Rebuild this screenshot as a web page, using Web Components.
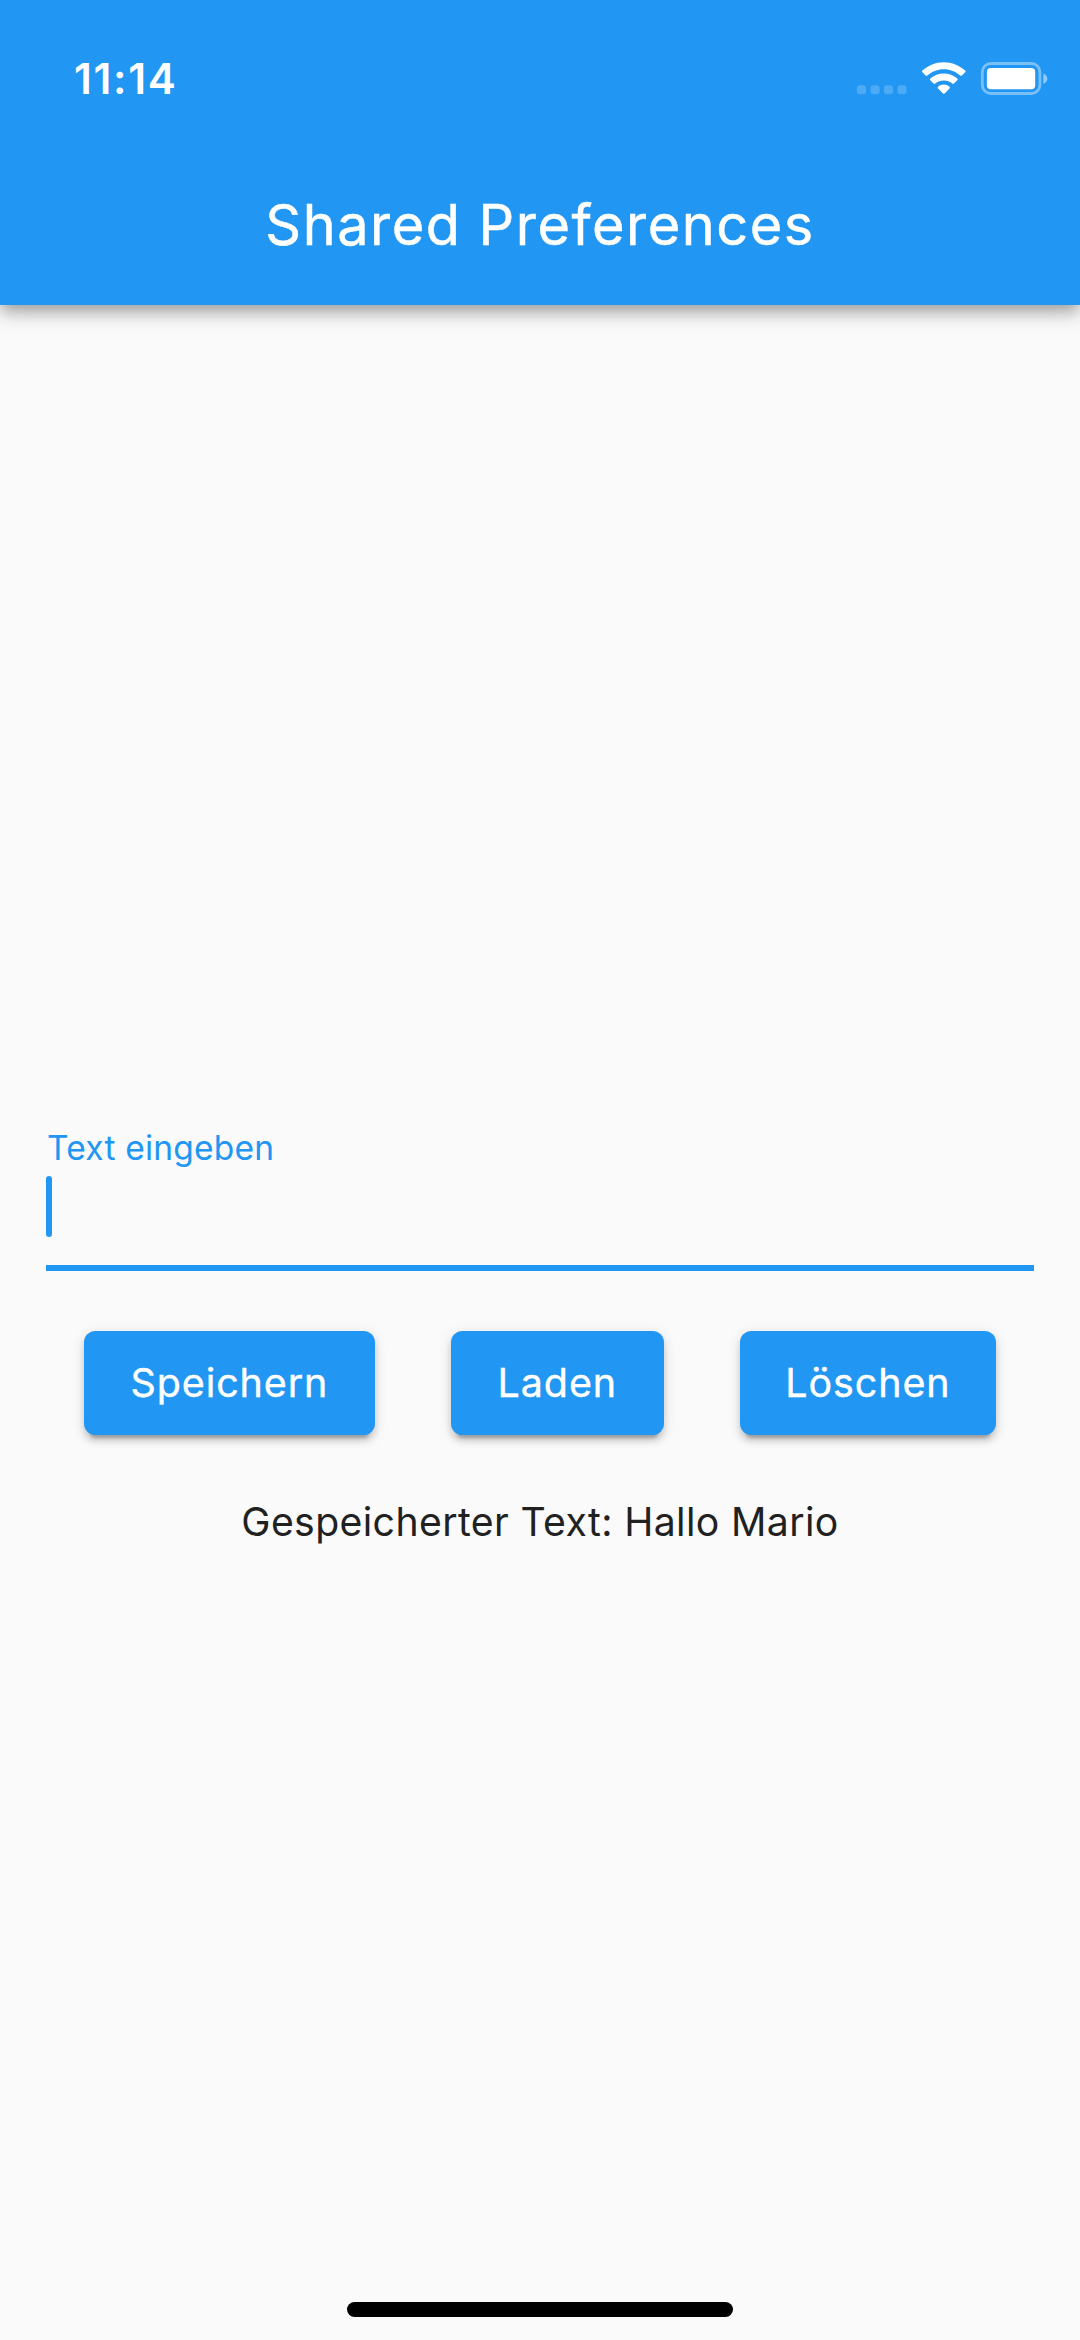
<!DOCTYPE html>
<html lang="de">
<head>
<meta charset="utf-8">
<title>Shared Preferences</title>
<style>
  html, body { margin: 0; height: 100%; background: #fafafa; }
  body { font-family: Inter, Roboto, "Liberation Sans", sans-serif; overflow: hidden; }
</style>
</head>
<body>
<prefs-app></prefs-app>
<script>
const define = (name, html) => {
  const template = document.createElement('template');
  template.innerHTML = html;
  customElements.define(name, class extends HTMLElement {
    constructor() {
      super();
      this.attachShadow({ mode: 'open' }).append(template.content.cloneNode(true));
    }
  });
};

define('status-bar', `
  <style>
    :host { display: flex; justify-content: space-between; height: 157px; box-sizing: border-box; padding: 0 32px 0 74px; color: #fff; }
    time { font-size: 42.2px; font-weight: 600; line-height: 157px; letter-spacing: 1.68px; white-space: nowrap; }
    svg { display: block; width: 192px; height: 36px; margin-top: 61px; }
  </style>
  <time><slot></slot></time>
  <svg viewBox="856 61 192 36" fill="#fff">
    <g fill-opacity=".2">
      <rect x="857" y="85.3" width="9" height="9" rx="3"/>
      <rect x="870.6" y="85.3" width="9" height="9" rx="3"/>
      <rect x="884" y="85.3" width="9" height="9" rx="3"/>
      <rect x="897.5" y="85.3" width="9" height="9" rx="3"/>
    </g>
    <path d="M943.8 62.2c8.2 0 15.7 3.2 21.4 8.4.5.5.5 1.200 0 1.700l-3.300 3.300c-.5.5-1.100.5-1.600 0-4.400-3.900-10.200-6.300-16.500-6.300s-12.100 2.400-16.500 6.300c-.5.5-1.100.5-1.600 0l-3.300-3.300c-.5-.5-.5-1.200 0-1.700 5.700-5.200 13.200-8.400 21.400-8.400z"/>
    <path d="M943.8 73.500c5.200 0 9.900 1.900 13.500 5.100.5.5.5 1.200 0 1.700l-3.300 3.300c-.5.5-1.100.5-1.600 0-2.300-2-5.300-3.200-8.600-3.200s-6.300 1.200-8.600 3.200c-.5.5-1.100.5-1.600 0l-3.300-3.300c-.5-.5-.5-1.200 0-1.700 3.600-3.200 8.300-5.100 13.500-5.100z"/>
    <path d="M943.8 84.600c2.200 0 4.200.8 5.700 2.100.5.5.5 1.200 0 1.700l-4.900 5c-.5.5-1.100.5-1.600 0l-4.900-5c-.5-.5-.5-1.200 0-1.700 1.500-1.300 3.500-2.100 5.700-2.100z"/>
    <rect x="982.3" y="63.500" width="57.600" height="30" rx="8.500" fill="none" stroke="#fff" stroke-opacity=".4" stroke-width="2.800"/>
    <rect x="986.900" y="68" width="48.300" height="21.300" rx="4"/>
    <path d="M1043.300 73.500c2.500 1 4 3 4 5.200s-1.500 4.200-4 5.200z" fill-opacity=".5"/>
  </svg>`);

define('app-bar', `
  <style>
    :host { display: block; height: 305.3px; background: #2196f3; color: #fff; box-shadow: 0 6px 12px -3px rgba(0,0,0,.2), 0 11px 14px rgba(0,0,0,.14), 0 3px 28px rgba(0,0,0,.12); }
    h1 { margin: 0; padding-top: 27.700px; height: 80px; line-height: 80px; text-align: center; font-size: 55.8px; font-weight: 400; letter-spacing: 1.530px; -webkit-text-stroke: .5px #fff; white-space: nowrap; }
  </style>
  <slot name="status"></slot>
  <h1><slot></slot></h1>`);

define('text-field', `
  <style>
    :host { display: flex; flex-direction: column; border-bottom: 6px solid #2196f3; height: 137px; color: #2196f3; }
    label { font-size: 33.5px; line-height: 41px; letter-spacing: .22px; padding-left: 1px; }
    i { display: block; width: 6px; height: 61px; border-radius: 3px; background: #2196f3; margin-top: 7px; }
  </style>
  <label><slot></slot></label>
  <i></i>`);

define('raised-button', `
  <style>
    :host { display: flex; align-items: center; justify-content: center; box-sizing: border-box; height: 104px; border-radius: 11.5px; background: #2196f3; color: #fff;
      font-size: 39.4px; font-weight: 400; letter-spacing: .92px; line-height: 48px; white-space: nowrap; -webkit-text-stroke: .4px #fff;
      box-shadow: 0 9px 3px -6px rgba(0,0,0,.2), 0 6px 6px rgba(0,0,0,.14), 0 3px 14px rgba(0,0,0,.12); }
  </style>
  <slot></slot>`);

define('home-indicator', `
  <style>
    :host { display: block; width: 386.500px; height: 14.700px; border-radius: 8px; background: #000; }
  </style>`);

define('prefs-app', `
  <style>
    :host { display: flex; flex-direction: column; height: 2340px; background: #fafafa; }
    main { display: flex; flex-direction: column; flex: 1; padding: 822.700px 46px 0; }
    .actions { display: flex; justify-content: space-around; margin-top: 60px; }
    .save { width: 291.300px; } .load { width: 213.500px; } .clear { width: 256.700px; }
    p { margin: 63px 0 0; height: 48px; line-height: 48px; text-align: center; color: #212121; font-size: 39.2px; letter-spacing: .376px; white-space: nowrap; }
    footer { display: flex; justify-content: center; padding-bottom: 23px; }
  </style>
  <app-bar><status-bar slot="status">11:14</status-bar>Shared Preferences</app-bar>
  <main>
    <text-field>Text eingeben</text-field>
    <div class="actions">
      <raised-button class="save">Speichern</raised-button>
      <raised-button class="load">Laden</raised-button>
      <raised-button class="clear">Löschen</raised-button>
    </div>
    <p>Gespeicherter Text: Hallo Mario</p>
  </main>
  <footer><home-indicator></home-indicator></footer>`);
</script>
</body>
</html>
